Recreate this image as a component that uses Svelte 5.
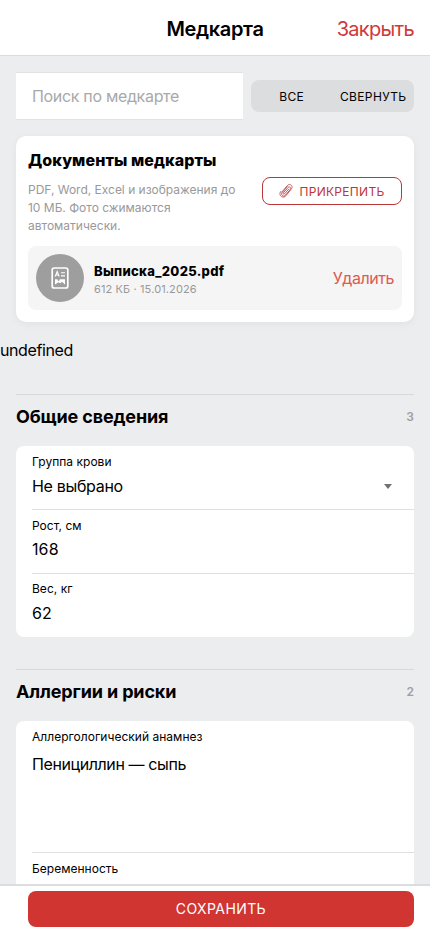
<script>
	let search = $state('');
	let mode = $state('');

	const file = { name: 'Выписка_2025.pdf', meta: '612 КБ · 15.01.2026' };

	const sections = [
		{
			title: 'Общие сведения',
			count: 3,
			fields: [
				{ label: 'Группа крови', type: 'select', value: 'Не выбрано' },
				{ label: 'Рост, см', type: 'text', value: '168' },
				{ label: 'Вес, кг', type: 'text', value: '62' }
			]
		},
		{
			title: 'Аллергии и риски',
			count: 2,
			fields: [
				{ label: 'Аллергологический анамнез', type: 'textarea', value: 'Пенициллин — сыпь' },
				{ label: 'Беременность', type: 'select', value: 'Не выбрано' }
			]
		}
	];
</script>

<div class="page">
	<header class="navbar">
		<h1 class="navbar-title">Медкарта</h1>
		<button class="close">Закрыть</button>
	</header>

	<main class="content">
		<div class="toolbar">
			<input class="search" type="text" placeholder="Поиск по медкарте" bind:value={search} />
			<div class="segmented">
				<button onclick={() => (mode = 'all')}>ВСЕ</button>
				<button onclick={() => (mode = 'collapsed')}>СВЕРНУТЬ</button>
			</div>
		</div>

		<section class="docs">
			<h2 class="docs-title">Документы медкарты</h2>
			<div class="docs-head">
				<p class="docs-hint">PDF, Word, Excel и изображения до 10 МБ. Фото сжимаются автоматически.</p>
				<button class="attach">
					<svg class="clip" viewBox="0 0 14 16" fill="none" stroke="currentColor" stroke-linecap="round">
						<path
							d="M9.600 5.800 5.400 10.600c-.8.9-2-.1-1.200-1L8.800 4.300c1.400-1.500 3.600.3 2.300 1.900L6.200 12c-2 2.100-5-.4-3.200-2.600L8 3.400"
							transform="translate(.2 .2)"
						/>
						<path d="M2.600 9.200 8.700 2.300c2-2.200 5.800.7 3.900 3.300L6.900 12.800c-2.900 3.400-8-.4-5.300-4.200" />
					</svg>
					<span>ПРИКРЕПИТЬ</span>
				</button>
			</div>
			<div class="file">
				<div class="file-icon">
					<svg viewBox="0 0 18 22" fill="none" stroke="#fff">
						<rect x="1.200" y="1" width="15.600" height="20" rx="2" stroke-width="1.700" />
						<path d="m4.200 9.500 2-5 2 5M4.900 8h2.600M10 5.700h4M10 8.900h4" stroke-width="1.100" />
						<path
							d="M4 12.200h2.600a1.100 1.100 0 1 0 1.900 0H14v5.200l-3-2.600-1.800 1.500-1.600-1.100L4 17.500z"
							fill="#fff"
							stroke="none"
						/>
					</svg>
				</div>
				<div class="file-info">
					<div class="file-name">{file.name}</div>
					<div class="file-meta">{file.meta}</div>
				</div>
				<button class="remove">Удалить</button>
			</div>
		</section>

		<div class="stray">undefined</div>

		{#each sections as section}
			<section class="group">
				<div class="group-head">
					<h2>{section.title}</h2>
					<span>{section.count}</span>
				</div>
				<div class="fields">
					{#each section.fields as field}
						<label class="field">
							<span class="label">{field.label}</span>
							{#if field.type === 'textarea'}
								<textarea bind:value={field.value}></textarea>
							{:else if field.type === 'select'}
								<span class="select">
									<select bind:value={field.value}>
										<option>Не выбрано</option>
									</select>
									<i class="arrow"></i>
								</span>
							{:else}
								<input type="text" bind:value={field.value} />
							{/if}
						</label>
					{/each}
				</div>
			</section>
		{/each}
	</main>

	<footer class="footer">
		<button class="save">СОХРАНИТЬ</button>
	</footer>
</div>

<style>
	:global(body) {
		overflow: hidden;
	}

	* {
		margin: 0;
		padding: 0;
		box-sizing: border-box;
	}

	button,
	input,
	select,
	textarea {
		font: inherit;
		color: inherit;
		letter-spacing: inherit;
		border: 0;
		background: none;
		outline: none;
		appearance: none;
	}

	.page {
		display: flex;
		flex-direction: column;
		height: 100vh;
		font-family: Inter, 'Liberation Sans', sans-serif;
		font-size: 16px;
		letter-spacing: -0.32px;
		color: #000;
		background: #ecedef;
	}

	.navbar {
		display: grid;
		grid-template-columns: 1fr auto 1fr;
		align-items: center;
		flex-shrink: 0;
		height: 56px;
		padding: 2px 16px 0;
		background: #fff;
		border-bottom: 1px solid #d9dbdd;
	}

	.navbar-title {
		grid-column: 2;
		font-size: 20px;
		font-weight: 600;
		line-height: 28px;
		letter-spacing: -0.35px;
	}

	.close {
		justify-self: end;
		font-size: 20px;
		letter-spacing: -0.7px;
		color: #cf3a38;
	}

	.content {
		flex: 1;
		min-height: 0;
		overflow: hidden;
	}

	.toolbar {
		display: flex;
		align-items: center;
		gap: 8px;
		margin: 16px 16px 0;
	}

	.search {
		width: 227px;
		height: 48px;
		padding: 0 16px;
		background: #fff;
		border: solid #e0e1e3;
		border-width: 1px 0;
	}

	.search::placeholder {
		color: #a9a9a9;
	}

	.segmented {
		display: flex;
		flex: 1;
		height: 32px;
		background: #dcdddf;
		border-radius: 8px;
	}

	.segmented button {
		flex: 1 1 0;
		min-width: 0;
		font-size: 12px;
		letter-spacing: 0.35px;
	}

	.docs {
		height: 186px;
		margin: 16px 16px 0;
		padding: 12px;
		background: #fff;
		border-radius: 10px;
		box-shadow: 0 2px 8px rgba(0, 0, 0, 0.05);
	}

	.docs-title {
		font-size: 16px;
		font-weight: 800;
		line-height: 24px;
		letter-spacing: 0.08px;
	}

	.docs-head {
		display: flex;
		justify-content: space-between;
		margin-top: 9px;
	}

	.docs-hint {
		width: 216px;
		font-size: 12px;
		line-height: 18px;
		letter-spacing: -0.01px;
		color: #999;
	}

	.attach {
		display: flex;
		align-items: center;
		justify-content: center;
		gap: 6px;
		width: 140px;
		height: 28px;
		margin-top: -4px;
		border: 1px solid #bb3638;
		border-radius: 8px;
		font-size: 12px;
		letter-spacing: 0.3px;
		color: #bb3638;
	}

	.clip {
		width: 14px;
		height: 16px;
		stroke-width: 0.8px;
	}

	.file {
		display: flex;
		align-items: center;
		height: 64px;
		margin-top: 11px;
		padding: 8px;
		background: #f5f5f5;
		border-radius: 8px;
	}

	.file-icon {
		display: flex;
		align-items: center;
		justify-content: center;
		width: 48px;
		height: 48px;
		border-radius: 50%;
		background: #9e9e9e;
	}

	.file-icon svg {
		width: 18px;
		height: 22px;
	}

	.file-info {
		flex: 1;
		margin-left: 10px;
		padding-top: 3px;
	}

	.file-name {
		font-size: 13px;
		font-weight: 800;
		line-height: 18px;
		letter-spacing: 0.3px;
	}

	.file-meta {
		font-size: 11px;
		line-height: 18px;
		letter-spacing: 0.12px;
		color: #999;
	}

	.remove {
		letter-spacing: -0.45px;
		color: #dc5a50;
	}

	.stray {
		margin-top: 16px;
		line-height: 24px;
		letter-spacing: -0.4px;
	}

	.group {
		margin: 32px 16px 0;
		border-top: 1px solid #d8d9db;
	}

	.group-head {
		display: flex;
		align-items: center;
		justify-content: space-between;
		height: 51px;
		padding-bottom: 8px;
	}

	.group-head h2 {
		font-size: 18px;
		font-weight: 700;
		letter-spacing: -0.14px;
	}

	.group-head span {
		font-size: 12px;
		font-weight: 600;
		letter-spacing: 0;
		color: #a0a0a2;
	}

	.fields {
		padding-left: 16px;
		background: #fff;
		border-radius: 8px;
	}

	.field {
		display: block;
		padding-top: 8px;
	}

	.field + .field {
		padding-top: 7.5px;
		border-top: 1px solid #dedfe0;
	}

	.field:last-child {
		padding-bottom: 1px;
	}

	.label {
		display: block;
		font-size: 12px;
		line-height: 16px;
		letter-spacing: 0.02px;
	}

	.field input,
	.field select {
		display: block;
		width: 100%;
		height: 39px;
		padding-bottom: 7px;
	}

	.field input {
		padding-bottom: 8px;
		letter-spacing: 0.1px;
	}

	.field textarea {
		display: block;
		width: 100%;
		height: 107px;
		padding-top: 7px;
		line-height: 24px;
		letter-spacing: -0.4px;
		resize: none;
	}

	.select {
		display: flex;
		align-items: center;
	}

	.arrow {
		flex-shrink: 0;
		margin: 0 22px 7px 0;
		border: 4px solid transparent;
		border-top: 5px solid #727272;
		border-bottom: 0;
	}

	.footer {
		flex-shrink: 0;
		height: 48px;
		padding: 4.6px 16px 0 28px;
		background: #fff;
		border-top: 2px solid #dcdddf;
	}

	.save {
		width: 100%;
		height: 36px;
		border-radius: 8px;
		background: #d03531;
		color: #fff;
		font-size: 14px;
		letter-spacing: 0.4px;
	}
</style>
